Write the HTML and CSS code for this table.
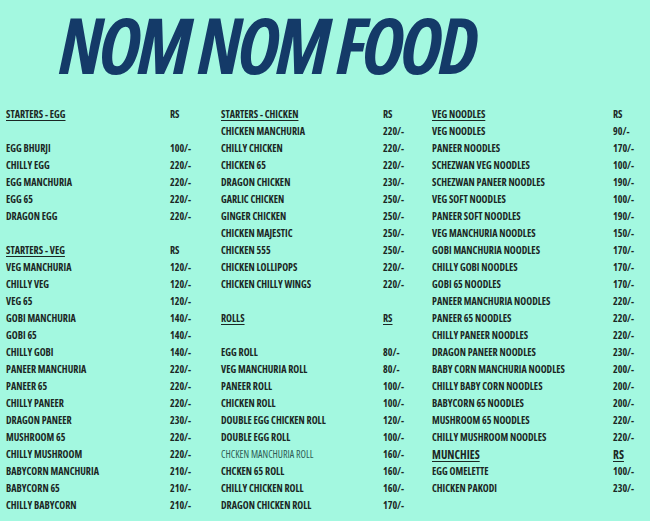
FILE: index.html
```html
<!DOCTYPE html>
<html lang="en">
<head>
<meta charset="utf-8">
<title>Nom Nom Food Menu</title>
<link rel="stylesheet" href="styles.css">
</head>
<body>
<header class="title"><h1 class="title-text">NOM NOM FOOD</h1></header>
<main class="menu">
  <section class="col col-1">
    <div class="name head">STARTERS - EGG</div><div class="price head plain">RS</div>
    <div class="blank"></div>
    <div class="name">EGG BHURJI</div><div class="price">100/-</div>
    <div class="name">CHILLY EGG</div><div class="price">220/-</div>
    <div class="name">EGG MANCHURIA</div><div class="price">220/-</div>
    <div class="name">EGG 65</div><div class="price">220/-</div>
    <div class="name">DRAGON EGG</div><div class="price">220/-</div>
    <div class="blank"></div>
    <div class="name head">STARTERS - VEG</div><div class="price head plain">RS</div>
    <div class="name">VEG MANCHURIA</div><div class="price">120/-</div>
    <div class="name">CHILLY VEG</div><div class="price">120/-</div>
    <div class="name">VEG 65</div><div class="price">120/-</div>
    <div class="name">GOBI MANCHURIA</div><div class="price">140/-</div>
    <div class="name">GOBI 65</div><div class="price">140/-</div>
    <div class="name">CHILLY GOBI</div><div class="price">140/-</div>
    <div class="name">PANEER MANCHURIA</div><div class="price">220/-</div>
    <div class="name">PANEER 65</div><div class="price">220/-</div>
    <div class="name">CHILLY PANEER</div><div class="price">220/-</div>
    <div class="name">DRAGON PANEER</div><div class="price">230/-</div>
    <div class="name">MUSHROOM 65</div><div class="price">220/-</div>
    <div class="name">CHILLY MUSHROOM</div><div class="price">220/-</div>
    <div class="name">BABYCORN MANCHURIA</div><div class="price">210/-</div>
    <div class="name">BABYCORN 65</div><div class="price">210/-</div>
    <div class="name">CHILLY BABYCORN</div><div class="price">210/-</div>
  </section>
  <section class="col col-2">
    <div class="name head">STARTERS - CHICKEN</div><div class="price head plain">RS</div>
    <div class="name">CHICKEN MANCHURIA</div><div class="price">220/-</div>
    <div class="name">CHILLY CHICKEN</div><div class="price">220/-</div>
    <div class="name">CHICKEN 65</div><div class="price">220/-</div>
    <div class="name">DRAGON CHICKEN</div><div class="price">230/-</div>
    <div class="name">GARLIC CHICKEN</div><div class="price">250/-</div>
    <div class="name">GINGER CHICKEN</div><div class="price">250/-</div>
    <div class="name">CHICKEN MAJESTIC</div><div class="price">250/-</div>
    <div class="name">CHICKEN 555</div><div class="price">250/-</div>
    <div class="name">CHICKEN LOLLIPOPS</div><div class="price">220/-</div>
    <div class="name">CHICKEN CHILLY WINGS</div><div class="price">220/-</div>
    <div class="blank"></div>
    <div class="name head">ROLLS</div><div class="price head">RS</div>
    <div class="blank"></div>
    <div class="name">EGG ROLL</div><div class="price">80/-</div>
    <div class="name">VEG MANCHURIA ROLL</div><div class="price">80/-</div>
    <div class="name">PANEER ROLL</div><div class="price">100/-</div>
    <div class="name">CHICKEN ROLL</div><div class="price">100/-</div>
    <div class="name">DOUBLE EGG CHICKEN ROLL</div><div class="price">120/-</div>
    <div class="name">DOUBLE EGG ROLL</div><div class="price">100/-</div>
    <div class="name light">CHCKEN MANCHURIA ROLL</div><div class="price">160/-</div>
    <div class="name">CHCKEN 65 ROLL</div><div class="price">160/-</div>
    <div class="name">CHILLY CHICKEN ROLL</div><div class="price">160/-</div>
    <div class="name">DRAGON CHICKEN ROLL</div><div class="price">170/-</div>
  </section>
  <section class="col col-3">
    <div class="name head">VEG NOODLES</div><div class="price head plain">RS</div>
    <div class="name">VEG NOODLES</div><div class="price">90/-</div>
    <div class="name">PANEER NOODLES</div><div class="price">170/-</div>
    <div class="name">SCHEZWAN VEG NOODLES</div><div class="price">100/-</div>
    <div class="name">SCHEZWAN PANEER NOODLES</div><div class="price">190/-</div>
    <div class="name">VEG SOFT NOODLES</div><div class="price">100/-</div>
    <div class="name">PANEER SOFT NOODLES</div><div class="price">190/-</div>
    <div class="name">VEG MANCHURIA NOODLES</div><div class="price">150/-</div>
    <div class="name">GOBI MANCHURIA NOODLES</div><div class="price">170/-</div>
    <div class="name">CHILLY GOBI NOODLES</div><div class="price">170/-</div>
    <div class="name">GOBI 65 NOODLES</div><div class="price">170/-</div>
    <div class="name">PANEER MANCHURIA NOODLES</div><div class="price">220/-</div>
    <div class="name">PANEER 65 NOODLES</div><div class="price">220/-</div>
    <div class="name">CHILLY PANEER NOODLES</div><div class="price">220/-</div>
    <div class="name">DRAGON PANEER NOODLES</div><div class="price">230/-</div>
    <div class="name">BABY CORN MANCHURIA NOODLES</div><div class="price">200/-</div>
    <div class="name">CHILLY BABY CORN NOODLES</div><div class="price">200/-</div>
    <div class="name">BABYCORN 65 NOODLES</div><div class="price">200/-</div>
    <div class="name">MUSHROOM 65 NOODLES</div><div class="price">220/-</div>
    <div class="name">CHILLY MUSHROOM NOODLES</div><div class="price">220/-</div>
    <div class="name head big">MUNCHIES</div><div class="price head big">RS</div>
    <div class="name">EGG OMELETTE</div><div class="price">100/-</div>
    <div class="name">CHICKEN PAKODI</div><div class="price">230/-</div>
  </section>
</main>
</body>
</html>
```

FILE: styles.css
```css
html, body {
  margin: 0;
  padding: 0;
}
body {
  background: #a3f8e0;
  width: 650px;
  height: 521px;
  overflow: hidden;
  color: #1b2724;
  font-family: "Open Sans", "Liberation Sans", sans-serif;
  font-stretch: 75%;
}
.title {
  padding-top: 5px;
  height: 81px;
}
.title-text {
  margin: 0;
  padding-left: 59px;
  font-size: 78px;
  line-height: 78px;
  font-weight: 700;
  font-style: italic;
  letter-spacing: -3.6px;
  color: #143a68;
  white-space: nowrap;
}
.menu {
  display: grid;
  grid-template-columns: 215px 211px 218px;
  padding: 20px 0 0 6px;
}
.col {
  display: grid;
  grid-auto-rows: 17px;
  align-items: start;
  font-size: 10px;
  line-height: 17px;
  font-weight: 700;
  white-space: nowrap;
}
.col-1 { grid-template-columns: 164px 51px; }
.col-2 { grid-template-columns: 162px 49px; }
.col-3 { grid-template-columns: 181px 37px; }
.blank { grid-column: 1 / -1; }
.head {
  text-decoration: underline;
  text-decoration-thickness: 1px;
  text-underline-offset: 2px;
}
.head.plain { text-decoration: none; }
.big { font-size: 11.5px; }
.light {
  font-weight: 400;
  color: #2e5b55;
}
```
